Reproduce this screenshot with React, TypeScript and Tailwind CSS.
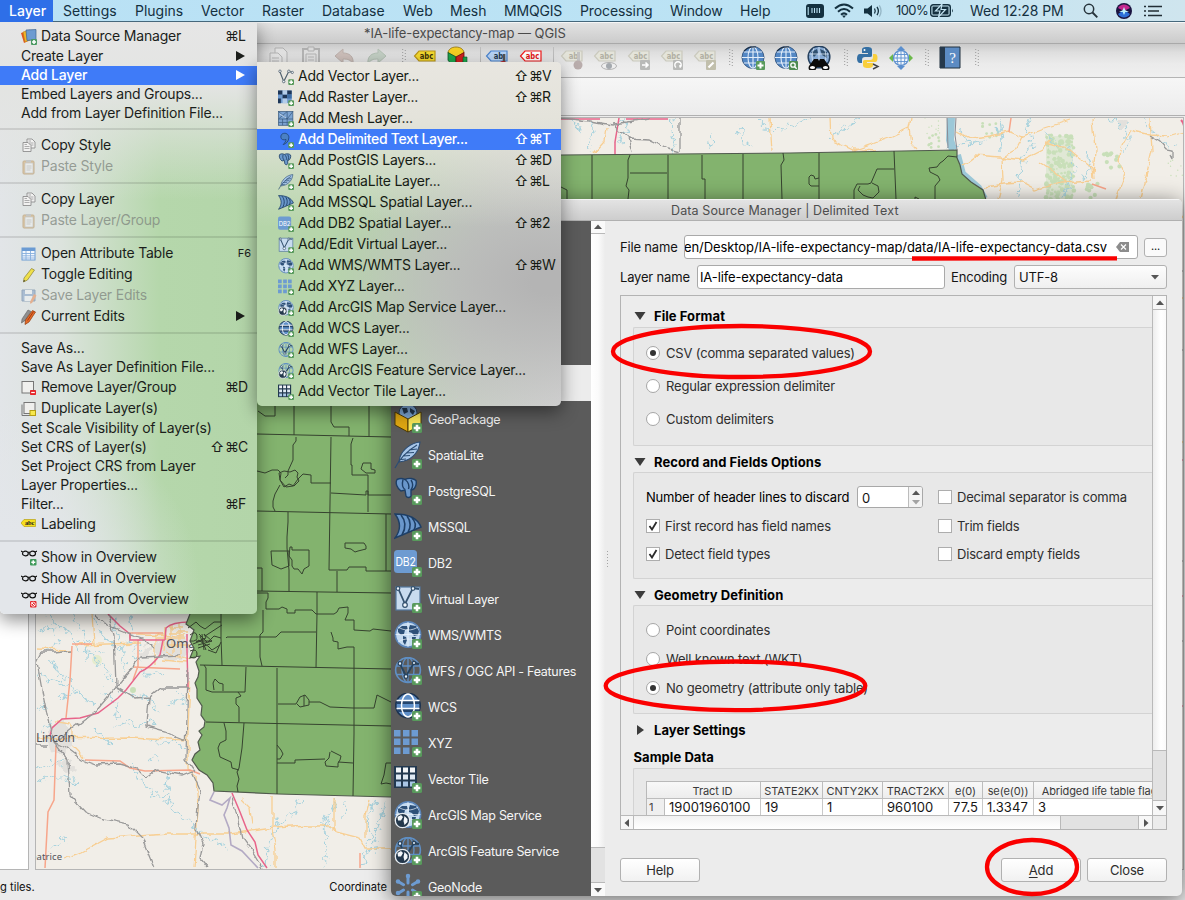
import type { ReactNode } from "react";

const UI = "font-['Inter','Liberation_Sans',sans-serif]";

/* ---------- layer icons (28 x 28 grid) ---------- */

const Plus = () => (
  <g>
    <rect x="18" y="18" width="10" height="10" rx="1.6" fill="#589a5c" />
    <path d="M23 19.7v6.6M19.7 23h6.6" stroke="#fff" strokeWidth="2.6" />
  </g>
);

const GlobeBase = () => (
  <g>
    <circle cx="14" cy="13.5" r="12.6" fill="#c4daf0" stroke="#5b86bb" strokeWidth="1.6" />
    <path d="M4 8l4-3 5 0 1 3-3 1-1 4-3 1-3-3zM9 15l3 1 1 3-2 5-2-3zM16 4l6 1 3 5-1 4-4 1-2-3-3-1 0-4zM18 16l4 0-1 4-3 2z" fill="#2d5078" />
    <path d="M1.5 13.5h25M14 1v25M4 6c6 4 14 4 20 0M4 21c6-4 14-4 20 0" stroke="#eef5fc" strokeWidth=".7" fill="none" />
  </g>
);

const WireGlobe = ({ stroke = "#5f8fc4", fill = "none" }: { stroke?: string; fill?: string }) => (
  <g fill="none" stroke={stroke} strokeWidth="1.3">
    <circle cx="14" cy="13" r="12.4" fill={fill} strokeWidth="1.6" />
    <ellipse cx="14" cy="13" rx="6" ry="12.4" />
    <path d="M2 9h24M2 17.500h24M14 1v24" />
  </g>
);

const VMark = ({ c = "#26435f" }: { c?: string }) => (
  <g fill="none" stroke={c} strokeWidth="1.8">
    <path d="M6 7l6 12 8-13 5 1" />
    <g fill="#e8f0f8" strokeWidth="1.2">
      <circle cx="6" cy="6.500" r="1.800" />
      <circle cx="12" cy="19.500" r="1.800" />
      <circle cx="20" cy="6" r="1.600" />
    </g>
  </g>
);

const EsriBall = () => (
  <g>
    <circle cx="8.500" cy="19.500" r="7.200" fill="#24384c" stroke="#e8edf2" strokeWidth="1.300" />
    <path d="M3.500 16l3.500-2 2 2-2 3.500-3 0zM10.500 15l3 3 0 3-3 3-1-4z" fill="#f4f7fa" />
  </g>
);

type IconName =
  | "vector" | "raster" | "mesh" | "comma" | "pg" | "feather" | "mssql" | "db2" | "virtual" | "wms"
  | "xyz" | "ams" | "wcs" | "wfs" | "afs" | "vtile" | "gpkg" | "geonode";

const layerArt: Record<IconName, ReactNode> = {
  vector: (
    <g fill="none" stroke="#50616f" strokeWidth="2">
      <path d="M3 4l7 18L19 4l6 2" />
      <g fill="#eef2f5" strokeWidth="1.400">
        <circle cx="3.500" cy="4" r="2.200" /><circle cx="10" cy="22" r="2.200" /><circle cx="19" cy="4" r="2.200" /><circle cx="25" cy="6" r="2" />
      </g>
    </g>
  ),
  raster: (
    <g>
      <rect x="0" y="1" width="24" height="22" fill="#6f9bd0" />
      <path d="M0 1h8v7H0zM16 1h8v7h-8zM8 8h8v7H8zM0 15h5v8H0z" fill="#1d3557" />
      <path d="M8 1h8v7H8zM8 15h8v8H8z" fill="#b4cdea" />
      <path d="M16 8h8v7h-8z" fill="#3f6ea6" />
    </g>
  ),
  mesh: (
    <g stroke="#3b5c80" strokeWidth="1.300" fill="#7ba3d2">
      <rect x="1" y="1" width="25" height="24" />
      <path d="M1 1l15 13M16 1L1 14M16 1v24M1 14h25M26 1L16 14M1 20h25M8 14v11" fill="none" />
      <path d="M3 5l11 7" stroke="#d9e8f7" />
    </g>
  ),
  comma: <path d="M8 3c5-2 11 0 11 7 0 6-5 11-10 12 3-3 5-6 5-9-4 2-9 0-9-4 0-3 1-5 3-6z" fill="#4a80c4" stroke="#234a80" strokeWidth="1.600" />,
  pg: (
    <g fill="#6a97cb" stroke="#1e3f66" strokeWidth="1.400">
      <path d="M3 2.500c4-2 6-1 8 0 4-2 9-1 11 1 1 4-1 8-3 9l-2 .5 0 6c-1 2-4 2-5 0l-1-6-4 1C3 11 1 6 3 2.500z" />
      <path d="M9 2.500c-1 4-1 8 2 10M11.500 3c3 2 4 6 3 9M17 13c2-3 2-7 0-10" fill="none" />
    </g>
  ),
  feather: (
    <g>
      <path d="M26 1C17 2 9 8 6 16l-1 5 5-1c8-2 15-9 16-19z" fill="#a8c6e8" stroke="#2c4d74" strokeWidth="1.100" />
      <path d="M1 27C6 17 13 10 23 4M9 15l7-.5M12 12l8-.5M7 18.500l5-.5M15 9l8-1" stroke="#2c4d74" strokeWidth="1.200" fill="none" />
    </g>
  ),
  mssql: (
    <g>
      <path d="M1 1c11 0 22 3 26 13L1 25C7 17 7 9 1 1z" fill="#6a97cb" stroke="#1e3f66" strokeWidth="1.400" />
      <path d="M7 2c5 6 5 13 1 20M13 3c4 5 4 12 1 16M18 5c4 4 4 8 2 12" stroke="#1e3f66" strokeWidth="1.600" fill="none" />
    </g>
  ),
  db2: (
    <g>
      <rect x="0" y="1" width="23" height="23" rx="3.500" fill="#6d9bd1" />
      <text x="11.500" y="17" fontSize="11.500" textAnchor="middle" textLength="20" lengthAdjust="spacingAndGlyphs" fill="#fff" className="font-['Inter',sans-serif]">DB2</text>
    </g>
  ),
  virtual: (
    <g>
      <rect x="2" y="2" width="24" height="23" fill="#c8dbef" stroke="#54779d" strokeWidth="1.200" />
      <path d="M4 3l7 16 8-16 6 1" stroke="#35526f" strokeWidth="1.800" fill="none" />
      <g fill="#f1f6fb" stroke="#35526f" strokeWidth="1.200"><circle cx="4" cy="3.500" r="1.800" /><circle cx="11" cy="20" r="2.300" /><circle cx="19" cy="3.500" r="1.800" /></g>
    </g>
  ),
  wms: <GlobeBase />,
  xyz: (
    <path fill="#6d9bd1" d="M0 1h6.500v6.500H0zM9 1h6.500v6.500H9zM17.500 1H24v6.500h-6.500zM0 9.500h6.500V16H0zM9 9.500h6.500V16H9zM17.500 9.500H24V16h-6.500zM0 18.500h6.500V25H0zM9 18.500h6.500V25H9z" />
  ),
  ams: <g><GlobeBase /><EsriBall /></g>,
  wcs: (
    <g>
      <circle cx="14" cy="12.500" r="12.200" fill="#5f8fc8" stroke="#1c3350" strokeWidth="1.600" />
      <path d="M3 7h22v4H3zM3 15h22v4H4z" fill="#24446b" />
      <g fill="none" stroke="#fff" strokeWidth="1.500"><ellipse cx="14" cy="12.500" rx="6.500" ry="11.500" /><path d="M2.500 7.500h23M2.500 15.500h23" /></g>
    </g>
  ),
  wfs: <g><WireGlobe /><VMark /></g>,
  afs: <g><WireGlobe /><VMark /><EsriBall /></g>,
  vtile: (
    <g>
      <rect x="0" y="1" width="23" height="22" fill="#22384f" />
      <path d="M2 2.500h5v5H2zM9 2.500h5v5H9zM16 2.500h5v5h-5z" fill="#f2f5f8" />
      <path d="M2 9.500h5v5H2zM9 9.500h5v5H9zM16 9.500h5v5h-5z" fill="#dfe9f3" />
      <path d="M2 16.500h5v5H2zM9 16.500h5v5H9zM16 16.500h5v5h-5z" fill="#a9c6e6" />
    </g>
  ),
  gpkg: (
    <g>
      <circle cx="14" cy="8" r="9" fill="#7ea8d6" stroke="#26435f" />
      <path d="M8 3l5 0 1 4-4 2zM16 3l5 3-2 4-3-3z" fill="#22384f" />
      <path d="M1 7l13 7v13L1 20z" fill="#e0a812" stroke="#4c3a05" />
      <path d="M27 7l-13 7v13l13-7z" fill="#fbe95a" stroke="#4c3a05" />
    </g>
  ),
  geonode: (
    <g stroke="#6d9bd1" strokeWidth="3" strokeLinecap="round">
      <path d="M14 4v6M14 19v6M5 9l4.500 2.700M18.500 17l4.500 2.700M5 19.700L9.500 17M18.500 11.700L23 9" />
      <path d="M14 3v.1M4 8.500v.1M24 8.500v.1M4 20v.1" strokeWidth="4.500" />
    </g>
  ),
};

function LayerIcon({ name, size }: { name: IconName; size: string }) {
  return (
    <svg viewBox="0 0 28 28" className={`${size} shrink-0`}>
      {layerArt[name]}
      <Plus />
    </svg>
  );
}

/* ---------- small menu icons (16 x 16 grid) ---------- */

const Sheet = ({ x, y }: { x: number; y: number }) => (
  <g>
    <path d={`M${x} ${y}h5l3 3v6h-8z`} fill="#f1f1f0" stroke="#8f8f8f" strokeWidth=".9" />
    <path d={`M${x + 1.5} ${y + 4}h5M${x + 1.5} ${y + 6}h5M${x + 1.5} ${y + 2}h2.500`} stroke="#9c9c9c" strokeWidth=".8" />
  </g>
);
const Glasses = ({ y = 4 }: { y?: number }) => (
  <g fill="none" stroke="#141414" strokeWidth="1.200">
    <ellipse cx="4.400" cy={y + 1} rx="2.900" ry="2.300" />
    <ellipse cx="11.600" cy={y + 1} rx="2.900" ry="2.300" />
    <path d={`M0 ${y - 1.5}l1.800 1M16 ${y - 1.500}l-1.800 1M7 ${y}q1-.6 2 0`} />
  </g>
);

type SmallName = "dsm" | "copy" | "paste" | "table" | "pencil" | "save" | "pencils" | "remove" | "dup" | "label" | "show" | "showall" | "hide";
const smallArt: Record<SmallName, ReactNode> = {
  dsm: (
    <g>
      <path d="M0 4l6-2 3 9-6 3z" fill="#e0561f" />
      <path d="M2 3l7-2 3 9-8 3z" fill="#f0b429" stroke="#b87d10" strokeWidth=".5" />
      <path d="M5 1l10-.5 0 10-9 1z" fill="#6d9bd1" stroke="#3f6490" strokeWidth=".7" />
      <rect x="10" y="10" width="6" height="6" rx="1" fill="#4c9a63" /><path d="M13 11v4M11 13h4" stroke="#fff" strokeWidth="1.600" />
    </g>
  ),
  copy: <g><Sheet x={6} y={1} /><Sheet x={2} y={4.500} /></g>,
  paste: (
    <g opacity=".5">
      <rect x="2" y="2" width="11" height="13" rx="1" fill="#d9a866" stroke="#a87e45" />
      <rect x="4" y="4" width="8" height="10" fill="#f0f0f0" stroke="#999" strokeWidth=".6" />
      <rect x="5" y="1" width="5" height="2.500" fill="#aaa" /><path d="M5.500 7h5M5.500 9h5M5.500 11h4" stroke="#999" strokeWidth=".8" />
    </g>
  ),
  table: (
    <g>
      <rect x="1" y="2" width="13" height="12" fill="#f4f8fd" stroke="#6b9bd3" />
      <path d="M1 2h13v3H1z" fill="#6b9bd3" />
      <path d="M1 7.500h13M1 9.800h13M1 12h13M5 5v9M9.500 5v9" stroke="#86aedd" strokeWidth=".9" />
    </g>
  ),
  pencil: <g><path d="M10.500 1.500l3 1.500-7 10-4 2 .5-4z" fill="#efe04a" stroke="#8a8036" strokeWidth=".7" /><path d="M2.500 15l.3-2 1.500.8z" fill="#333" /></g>,
  save: (
    <g opacity=".55">
      <path d="M1 2h13v11H1z" fill="#7d9dc4" stroke="#58779b" /><path d="M4 2h7v4H4zM3.500 8h8v5h-8z" fill="#eef1f4" />
      <path d="M13 6l2.500 1.500L11 15l-2 .8.200-2.300z" fill="#e8874e" />
    </g>
  ),
  pencils: (
    <g>
      <path d="M7 1l3 1.500-6 9-3.500 2.500.5-4z" fill="#8f8f8f" stroke="#5f5f5f" strokeWidth=".6" />
      <path d="M11.500 1.500l3 1.500-6.500 10-4 2.500.5-4.500z" fill="#e56a26" stroke="#8f3b0e" strokeWidth=".7" /><path d="M12.500 2.500l-6 9" stroke="#a63a12" />
    </g>
  ),
  remove: <g><rect x="1" y="1.500" width="11.500" height="11.500" fill="#f0f0ee" stroke="#777" /><rect x="9" y="10" width="6" height="5" rx=".8" fill="#e5252a" /><path d="M10.200 12.500h3.600" stroke="#fff" strokeWidth="1.200" /></g>,
  dup: <g><path d="M1 3.500v11h10" fill="none" stroke="#777" /><rect x="3" y="1.500" width="11" height="11" fill="#efefed" stroke="#777" /><rect x="9" y="9.500" width="5.500" height="5" fill="#f7e84c" stroke="#b59d12" /></g>,
  label: (
    <g>
      <path d="M3 2.500h11.500v7H3L0 6z" fill="#f6de1e" stroke="#b7a216" strokeWidth=".7" />
      <text x="8.500" y="8.200" fontSize="6.500" fontWeight="700" textAnchor="middle" fill="#222" className="font-['Liberation_Serif',serif]">abc</text>
    </g>
  ),
  show: <g><Glasses y={2.500} /><rect x="9" y="9" width="6.500" height="6.500" rx="1" fill="#3f9a5a" /><path d="M12.250 10.300v4M10.300 12.250h4" stroke="#fff" strokeWidth="1.400" /></g>,
  showall: <Glasses y={6.500} />,
  hide: <g><Glasses y={2.500} /><rect x="9" y="9" width="6.500" height="6.500" rx="1" fill="#e5252a" /><path d="M10.500 10.500l3.500 3.500" stroke="#fff" /><circle cx="12.250" cy="12.250" r="2.100" fill="none" stroke="#fff" strokeWidth=".8" /></g>,
};
const SmallIcon = ({ name }: { name: SmallName }) => (
  <svg viewBox="0 0 16 16" className="h-4 w-4 shrink-0">{smallArt[name]}</svg>
);

/* ---------- menus ---------- */

function Keys({ keys }: { keys: string }) {
  const shift = keys.startsWith("⇧");
  const letter = keys[keys.length - 1];
  return (
    <span className="mb-[2px] flex shrink-0">
      <span className="-ml-[1px] mr-[1px] w-[14px] text-center">{shift ? "⇧" : ""}</span>
      <span className="w-[13px]">⌘</span>
      <span className="w-[19px]">{letter}</span>
    </span>
  );
}

type Item = { t: string; icon?: SmallName; keys?: string; fn?: string; arrow?: boolean; on?: boolean; off?: boolean };
const layerMenu: Item[][] = [
  [
    { t: "Data Source Manager", icon: "dsm", keys: "⌘L" },
    { t: "Create Layer", arrow: true },
    { t: "Add Layer", arrow: true, on: true },
    { t: "Embed Layers and Groups..." },
    { t: "Add from Layer Definition File..." },
  ],
  [{ t: "Copy Style", icon: "copy" }, { t: "Paste Style", icon: "paste", off: true }],
  [{ t: "Copy Layer", icon: "copy" }, { t: "Paste Layer/Group", icon: "paste", off: true }],
  [
    { t: "Open Attribute Table", icon: "table", fn: "F6" },
    { t: "Toggle Editing", icon: "pencil" },
    { t: "Save Layer Edits", icon: "save", off: true },
    { t: "Current Edits", icon: "pencils", arrow: true },
  ],
  [
    { t: "Save As..." },
    { t: "Save As Layer Definition File..." },
    { t: "Remove Layer/Group", icon: "remove", keys: "⌘D" },
    { t: "Duplicate Layer(s)", icon: "dup" },
    { t: "Set Scale Visibility of Layer(s)" },
    { t: "Set CRS of Layer(s)", keys: "⇧⌘C" },
    { t: "Set Project CRS from Layer" },
    { t: "Layer Properties..." },
    { t: "Filter...", keys: "⌘F" },
    { t: "Labeling", icon: "label" },
  ],
  [
    { t: "Show in Overview", icon: "show" },
    { t: "Show All in Overview", icon: "showall" },
    { t: "Hide All from Overview", icon: "hide" },
  ],
];

function LayerMenu() {
  return (
    <div className="absolute left-0 top-[22px] z-30 h-[592px] w-[257px] overflow-hidden rounded-b-[5px] bg-[linear-gradient(to_bottom,#e6e6e6_0%,#e3e4e2_11%,rgba(226,228,226,0)_30%),radial-gradient(ellipse_200px_190px_at_0%_96%,#e3e6ea_30%,rgba(226,230,230,0)_100%),linear-gradient(to_right,#e2e5e8_0%,#dce3dd_24%,#b5d7ab_62%,#b3d5a9_100%)] py-1 text-[14px] tracking-[-0.2px] text-[#1b1e1b] shadow-[0_6px_18px_rgba(0,0,0,0.45)]">
      {layerMenu.map((group, gi) => (
        <div key={gi}>
          {gi > 0 && (
            <div className="h-3 pt-[5px]"><div className="h-[2px] bg-black/10" /></div>
          )}
          {group.map((it) => (
            <div
              key={it.t}
              className={`flex items-center pl-[21px] ${it.icon ? "h-[21px]" : "h-[19px]"} ${it.on ? "bg-[#3f7bf8] font-medium text-white" : ""} ${it.off ? "text-[#7d847d]/75" : ""}`}
            >
              {it.icon && <SmallIcon name={it.icon} />}
              <span className={`mb-[2px] whitespace-nowrap ${it.icon ? "ml-1" : ""}`}>{it.t}</span>
              <span className="flex-1" />
              {it.keys && <Keys keys={it.keys} />}
              {it.fn && <span className="mr-[6px] text-[11px] tracking-normal">{it.fn}</span>}
              {it.arrow && (
                <svg viewBox="0 0 9 10" className="mb-[1px] mr-[12px] h-[10px] w-[9px]"><path d="M0 0l9 5-9 5z" fill="currentColor" /></svg>
              )}
            </div>
          ))}
        </div>
      ))}
    </div>
  );
}

const addMenu: { t: string; icon: IconName; keys?: string; on?: boolean }[] = [
  { t: "Add Vector Layer...", icon: "vector", keys: "⇧⌘V" },
  { t: "Add Raster Layer...", icon: "raster", keys: "⇧⌘R" },
  { t: "Add Mesh Layer...", icon: "mesh" },
  { t: "Add Delimited Text Layer...", icon: "comma", keys: "⇧⌘T", on: true },
  { t: "Add PostGIS Layers...", icon: "pg", keys: "⇧⌘D" },
  { t: "Add SpatiaLite Layer...", icon: "feather", keys: "⇧⌘L" },
  { t: "Add MSSQL Spatial Layer...", icon: "mssql" },
  { t: "Add DB2 Spatial Layer...", icon: "db2", keys: "⇧⌘2" },
  { t: "Add/Edit Virtual Layer...", icon: "virtual" },
  { t: "Add WMS/WMTS Layer...", icon: "wms", keys: "⇧⌘W" },
  { t: "Add XYZ Layer...", icon: "xyz" },
  { t: "Add ArcGIS Map Service Layer...", icon: "ams" },
  { t: "Add WCS Layer...", icon: "wcs" },
  { t: "Add WFS Layer...", icon: "wfs" },
  { t: "Add ArcGIS Feature Service Layer...", icon: "afs" },
  { t: "Add Vector Tile Layer...", icon: "vtile" },
];

function AddLayerMenu() {
  return (
    <div className="absolute left-[257px] top-[62px] z-40 h-[344px] w-[304px] overflow-hidden rounded-[5px] rounded-tl-none bg-[linear-gradient(to_bottom,#e8e6e0_0%,#e4e3db_16%,rgba(226,228,216,0)_48%),radial-gradient(ellipse_230px_150px_at_96%_64%,#b4b4b4_8%,rgba(184,184,184,0.8)_40%,rgba(190,195,188,0)_100%),linear-gradient(100deg,#b4d5a8_0%,#b7d5ac_35%,#c9d0c6_72%,#d4d4d4_100%)] py-1 text-[14px] tracking-[-0.24px] text-[#161c14] shadow-[0_6px_18px_rgba(0,0,0,0.45)]">
      {addMenu.map((it) => (
        <div key={it.t} className={`flex h-[21px] items-center pl-[21px] ${it.on ? "bg-[#3f7bf8] font-medium tracking-[-0.34px] text-white" : ""}`}>
          <LayerIcon name={it.icon} size="h-4 w-4" />
          <span className="mb-[2px] ml-1 whitespace-nowrap">{it.t}</span>
          <span className="flex-1" />
          {it.keys && <Keys keys={it.keys} />}
        </div>
      ))}
    </div>
  );
}

/* ---------- system menu bar ---------- */

function MenuBar() {
  return (
    <div className="relative z-50 flex h-[22px] w-full items-center border-b border-[#46687c] bg-[linear-gradient(to_right,#b9e1f5,#bce3f4_65%,#cfe5ee_100%)] text-[14px] text-[#14303f]">
      <div className="flex h-[22px] w-[53px] items-center bg-[#2e6fe8] pl-[9px] font-medium text-white">Layer</div>
      <span className="ml-[10px] w-[72px]">Settings</span>
      <span className="w-[66px]">Plugins</span>
      <span className="w-[61px]">Vector</span>
      <span className="w-[60px]">Raster</span>
      <span className="w-[81px]">Database</span>
      <span className="w-[47px]">Web</span>
      <span className="w-[54px]">Mesh</span>
      <span className="w-[76px] tracking-[-0.2px]">MMQGIS</span>
      <span className="w-[90px] tracking-[-0.1px]">Processing</span>
      <span className="w-[70px] tracking-[-0.2px]">Window</span>
      <span className="w-[66px]">Help</span>
      <svg viewBox="0 0 18 14" className="h-[14px] w-[18px]">
        <rect width="18" height="14" rx="3" fill="#14303f" />
        <path d="M2.200 3v8M6 4v5M8.500 4v5M11 4v5M13.500 4v5" stroke="#b9dff0" strokeWidth="1.100" />
      </svg>
      <svg viewBox="0 0 20 15" className="ml-[10px] h-[15px] w-[20px]" fill="none" stroke="#14303f" strokeWidth="2">
        <path d="M1 5.500Q10-2.500 19 5.500M4 8.700Q10 3.300 16 8.700M7 11.700Q10 9 13 11.700" /><path d="M8 12.500h4l-2 2.500z" fill="#14303f" stroke="none" />
      </svg>
      <svg viewBox="0 0 18 14" className="ml-[10px] h-[14px] w-[18px]" fill="none" stroke="#14303f" strokeWidth="1.300">
        <path d="M0 4.500h3.500L8 1v12L3.500 9.500H0z" fill="#14303f" stroke="none" /><path d="M10.500 4.500q1.500 2.500 0 5M13 2.800q2.800 4.200 0 8.400" /><path d="M15.300 1.300q3.500 5.700 0 11.400" opacity=".25" />
      </svg>
      <span className="ml-[14px] w-[34px] text-[13px] tracking-[-0.6px]">100%</span>
      <svg viewBox="0 0 24 13" className="h-[13px] w-[24px]">
        <rect x=".7" y=".7" width="19.600" height="11.600" rx="2.500" fill="none" stroke="#14303f" strokeWidth="1.400" />
        <rect x="2.500" y="2.500" width="16" height="8" fill="#14303f" /><path d="M12 0L5.500 7h4.500L8.500 13 15.500 5.500H11z" fill="#14303f" stroke="#c2e2f0" strokeWidth="1.200" />
        <path d="M22 4.500v4q1.500-2 0-4z" fill="#14303f" />
      </svg>
      <span className="ml-[16px] w-[113px] whitespace-nowrap tracking-[-0.1px]">Wed 12:28 PM</span>
      <svg viewBox="0 0 15 15" className="h-[15px] w-[15px]" fill="none" stroke="#26333b" strokeWidth="1.500"><circle cx="6" cy="6" r="4.700" /><path d="M9.500 9.500L14.300 14.300" strokeWidth="1.900" /></svg>
      <svg viewBox="0 0 16 16" className="ml-[18px] h-4 w-4">
        <circle cx="8" cy="8" r="8" fill="#1b1440" /><path d="M2 5a7 7 0 0 1 12 0L8 8z" fill="#c3278f" /><path d="M2 11l6-4 6 4a7 7 0 0 1-12 0z" fill="#2c6fd8" />
        <path d="M8 4l1.300 3.300L13 9 9.300 9 8 12l-1.300-3L3 9l3.700-1.700z" fill="#bff3fb" />
      </svg>
      <svg viewBox="0 0 18 12" className="ml-[12px] h-3 w-[18px]"><path d="M4 1.500h14M4 6h11M4 10.500h14" stroke="#222e35" strokeWidth="1.600" /><path d="M0 1.500h2M0 6h2M0 10.500h2" stroke="#222e35" strokeWidth="1.600" /></svg>
    </div>
  );
}

/* ---------- toolbar ---------- */

const Dots = ({ m }: { m: string }) => (
  <svg viewBox="0 0 4 18" className={`${m} h-[18px] w-[4px] shrink-0`}>
    <path d="M.7 0v18M3.300 1v17" stroke="#9b9b9b" strokeWidth="1" strokeDasharray="1 2" />
  </svg>
);
const Sep = ({ m }: { m: string }) => <div className={`${m} flex w-[4px] shrink-0 justify-center`}><div className="h-[22px] w-px bg-[#bdbdbd]" /></div>;
const Tool = ({ m, children }: { m: string; children: ReactNode }) => (
  <svg viewBox="0 0 24 24" className={`${m} h-6 w-6 shrink-0`}>{children}</svg>
);
const Tag = ({ fill, stroke, text, label = "abc" }: { fill: string; stroke: string; text: string; label?: string }) => (
  <g>
    <path d="M6 5h16v10H6L1.500 10z" fill={fill} stroke={stroke} strokeWidth="1.200" />
    <text x="13.500" y="13.200" fontSize="8.500" fontWeight="700" textAnchor="middle" fill={text} className="font-['DejaVu_Sans',sans-serif]" textLength={label.length > 2 ? 13.500 : 9.500} lengthAdjust="spacingAndGlyphs">{label}</text>
  </g>
);
const GrayTag = ({ label }: { label?: string }) => <Tag fill="#e4e4da" stroke="#cac9bd" text="#b0afa2" label={label} />;
const WebGlobe = () => (
  <g>
    <circle cx="12" cy="11.500" r="11" fill="#5387c4" stroke="#3c5d86" />
    <g fill="none" stroke="#e4eefa" strokeWidth="1.100"><ellipse cx="12" cy="11.500" rx="5" ry="10.700" /><path d="M12 1v21M1 11.500h22M3 6h18M3 17h18" /></g>
    <path d="M3 5Q8 0 15 1" stroke="#1f2f42" strokeWidth="1.200" fill="none" />
  </g>
);

function Toolbar() {
  return (
    <div className="flex h-[34px] items-center border-b border-[#b4b4b4] bg-[linear-gradient(to_bottom,#c9c9c9_0%,#dedede_25%,#ebebeb_60%,#efefef_100%)] pb-[5px] pl-[266px]">
      <Tool m=""><g opacity=".4" fill="#eee" stroke="#777"><path d="M9 2h8l4 4v11H9z" /><path d="M4 7h8l4 4v11H4z" /><path d="M6 12h7M6 15h7" /></g></Tool>
      <Tool m="ml-[9px]"><g opacity=".4" fill="#e4e4e4" stroke="#777"><rect x="4" y="3" width="16" height="18" strokeWidth="2" /><path d="M7 8h10v11H7zM9 1h6v4H9zM9 11h6M9 14h6" /></g></Tool>
      <Tool m="ml-[9px]"><path d="M3 10l8-7v4c6 0 11 3 10 11-2-4-5-5-10-5v4z" fill="#cdbfba" stroke="#bdb1ac" /></Tool>
      <Tool m="ml-[9px]"><path d="M21 10l-8-7v4C7 7 2 10 3 18c2-4 5-5 10-5v4z" fill="#c3cfc4" stroke="#b3c0b4" /></Tool>
      <Dots m="ml-[13px]" />
      <Tool m="ml-[7px]"><Tag fill="#f4d92e" stroke="#b9951a" text="#3f3308" /></Tool>
      <Tool m="ml-[8px]">
        <path d="M11 11L3 7c0-3 3-6 8-6s8 3 8 6z" fill="#f4ce22" stroke="#8b6d0d" strokeWidth=".8" /><path d="M11 11L3 6.500v8l5 4.500h3z" fill="#1ca64d" stroke="#0f5428" strokeWidth=".8" /><path d="M11 11l8-4.500v8L14 19h-3z" fill="#cf2020" stroke="#6d0e0e" strokeWidth=".8" /><path d="M18 11h4v9h-4z" fill="#1ca64d" stroke="#0f5428" strokeWidth=".6" />
      </Tool>
      <Sep m="ml-[9px]" />
      <Tool m="ml-[3px]"><Tag fill="#b7d3f5" stroke="#4c85cf" text="#23384f" label="ab" /><path d="M19 8v10" stroke="#555" strokeWidth="2.600" /><circle cx="18" cy="19" r="4" fill="#b3282d" /></Tool>
      <Tool m="ml-[10px]"><Tag fill="#fff" stroke="#f01a1a" text="#e51313" /></Tool>
      <Sep m="ml-[8px]" />
      <Tool m="ml-[5px]"><GrayTag label="ab" /><path d="M18.500 6v11" stroke="#c2c2c2" strokeWidth="3" /><circle cx="18" cy="19" r="4.500" fill="#b9adac" /></Tool>
      <Tool m="ml-[9px]"><GrayTag /><ellipse cx="16" cy="20" rx="7.500" ry="3.500" fill="#eee" stroke="#b2b2b2" /><circle cx="16" cy="20" r="3" fill="#a4a9ae" /></Tool>
      <Tool m="ml-[10px]"><GrayTag /><rect x="13" y="14" width="10" height="10" rx="1" fill="#b9bab8" /><path d="M15 19h6M18.500 16.500L21 19l-2.500 2.500" stroke="#fff" strokeWidth="1.600" fill="none" /></Tool>
      <Tool m="ml-[9px]"><GrayTag /><rect x="13" y="14" width="10" height="10" rx="1" fill="#b9bab8" /><path d="M16 21.500a3.200 3.200 0 1 1 4 0M20 21.500v-2.500" stroke="#fff" strokeWidth="1.400" fill="none" /></Tool>
      <Tool m="ml-[9px]"><GrayTag /><rect x="13" y="14" width="10" height="10" rx="1" fill="#c1bfac" /><path d="M15.500 21.500l5-5" stroke="#fff" strokeWidth="2.200" /></Tool>
      <Dots m="ml-[12px]" />
      <Tool m="ml-[8px]"><WebGlobe /><rect x="15" y="15" width="9" height="9" rx="1" fill="#5a9a5c" /><path d="M19.500 16.500v6M16.500 19.500h6" stroke="#fff" strokeWidth="2" /></Tool>
      <Tool m="ml-[9px]"><WebGlobe /><rect x="15" y="15" width="9" height="9" rx="1" fill="#4d8c50" /><circle cx="19" cy="19" r="2.200" fill="none" stroke="#fff" strokeWidth="1.300" /><path d="M20.700 20.700l2 2" stroke="#fff" strokeWidth="1.400" /></Tool>
      <Tool m="ml-[9px]">
        <circle cx="12" cy="11" r="10.800" fill="#86aad4" stroke="#26415f" strokeWidth="1.500" /><path d="M4 6l6-3 1 4-4 4zM13 3l7 3 0 6-5-3z" fill="#30506f" /><path d="M2 8h20M12 1v20M7 2q-4 9 0 16M17 2q4 9 0 16" stroke="#dbe8f6" strokeWidth=".8" fill="none" />
        <path d="M7 13h4l1 2 1-2h4l5 7a3 3 0 0 1-7 3l-1-2h-4l-1 2a3 3 0 0 1-7-3z" fill="#0c0c0c" /><ellipse cx="5.500" cy="21.500" rx="2.600" ry="1.500" fill="#fff" /><ellipse cx="18.500" cy="21.500" rx="2.600" ry="1.500" fill="#fff" />
      </Tool>
      <Dots m="ml-[13px]" />
      <Tool m="ml-[8px]">
        <path d="M11 1c-4 0-5 1-5 3v3h6v1H4C2 8 1 10 1 12.500S2 17 4 17h2v-3c0-2 1-3 3-3h5c2 0 2-1 2-2V4c0-2-1-3-5-3z" fill="#3570a4" />
        <path d="M12 22c4 0 5-1 5-3v-2h-6v-1h8c2 0 2.500-2 2.500-4S21 8 19 8h-2v3c0 2-1 3-3 3H9c-2 0-2 1-2 2v3c0 2 1 3 5 3z" fill="#f9cf3c" /><circle cx="8.500" cy="4" r="1" fill="#fff" />
        <path d="M17 18l5 2.500-5 2.500" fill="none" stroke="#444" strokeWidth="1.400" />
      </Tool>
      <Tool m="ml-[9px]">
        <path d="M12 0l4 4H8zM12 24l4-4H8z" fill="#5b8fce" /><path d="M0 12l4-4v8zM24 12l-4-4v8z" fill="#6cb94b" />
        <circle cx="12" cy="12" r="7.500" fill="#f3f7fc" stroke="#5b8fce" strokeWidth="1.300" /><path d="M12 4.500v15M4.500 12h15M6 8.500h12M6 15.500h12M9 5.500q-2 6.500 0 13M15 5.500q2 6.500 0 13" stroke="#5b8fce" strokeWidth=".9" fill="none" />
      </Tool>
      <Dots m="ml-[12px]" />
      <Tool m="ml-[9px]">
        <path d="M2 1h20v21H2z" fill="#5c8bc3" stroke="#20303f" /><path d="M2 1h5v21H2z" fill="#26394c" />
        <text x="14.500" y="17" fontSize="15" textAnchor="middle" fill="#fff" className="font-['Liberation_Serif',serif]">?</text>
      </Tool>
      <Dots m="ml-[13px]" />
    </div>
  );
}

/* ---------- map ---------- */

const water = "#a9d3de";
const orange = "#f8cf93";
const trunk = "#f7a58a";
const motor = "#e8648a";
const rail = "#989898";

const iowa =
  "M100 156L561 155L790 153L957 150L957 158L960 165L962 174L971 182L983 190L986 200L986 797L391 797L278 794L214 791L213 783L207 775L199 770L192 760L195 754L200 750L198 742L202 735L199 731L204 727L205 721L201 715L202 706L197 698L197 689L195 683L198 677L199 671L196 662L200 656L190 658L194 648L190 641L194 630L186 624L190 614L186 600Z";

const counties = [
  "M257 434L391 437M257 511L391 514M257 591L391 593M200 665L391 669M206 722L391 726",
  "M294 406V435M331 406V422L334 427H349V436M369 406V436M258 411L265 416H275V406",
  "M296 437V441L293 445V460L288 471V475L285 478M331 437L329 570M353 438L351 444V465H352V475H368V512M331 493L366 495V491H368V495H391",
  "M257 471L265 473L272 470H278L281 473L280 480L286 487L293 486L298 479L303 474L311 475V483H331M279 473L284 471L290 472L295 470L298 473L297 477L299 481L294 486L289 484L284 487L280 480zM280 485L275 494L273 501V507L275 511",
  "M288 512V522L287 537V548L289 570V591M271 551H289V566L281 569L272 565zM290 547H292V550H309V566L304 569L302 574L298 569L294 569L292 566V560L289 556z",
  "M345 543H364L366 546V549L358 551L355 552L351 549L345 548zM329 570H347L349 567H366V571H391M337 571V592M386 514V571M363 463H371V469L375 470V473H371L366 473L361 469zM257 568H262V591",
  "M257 593L268 593L268 598L266 602V609H279L282 607L287 609V613H295V610H312L316 614H334L337 612L339 608L348 607V613L345 620H354V630L370 631L373 629L391 631",
  "M317 592V614L316 668M263 610L263 632L260 635V657L262 666M226 638L227 637H276L281 632H316M221 614V638L222 665M331 632L333 638V641L338 642V649L347 647H354V734L353 796",
  "M204 665L206 668V690L212 692H245L246 667M214 690L213 683L215 679L219 683L223 684V691M238 692L241 696L236 698V704L239 707L239 722M277 668V794",
  "M278 704H296L300 697L305 695L309 700V705L300 707L297 704M304 695V706M309 702L320 702L330 707L353 708H374L377 695L391 702",
  "M224 723L226 731V740L220 743L218 748L220 757L231 762L232 768L239 770M244 723L242 748L239 768L237 772L239 779L237 786L238 792M277 745L281 750L283 754L280 759H277",
  "M277 763H295V760L325 759M331 751L341 756L340 760L338 763V767L326 766L325 762L329 758L330 752M338 762L353 763M391 763H386L384 775L381 784L386 783L391 784",
  "M592 155V200M630 155L628 160V178L626 186L629 190L628 199M630 173H667M668 155V200M702 155V179H705V199M743 154V200M783 153L784 160L781 165L782 199M819 153V200M819 178L815 179L814 176L811 175L809 177V184L811 186H819M894 151L896 199M894 169H877L874 176L871 183L868 184H857L854 190V199M860 186L858 190L863 195L868 197L873 198L876 195L879 192L878 186L872 183M957 157L948 156L943 161L940 163L937 167L929 168L930 172L938 176L940 180L935 186L935 199M561 187L567 190V199M915 199V197L919 199",
];

const rivers = [
  "M46 614L55 622L70 636L80 650L95 658L112 680M70 614L82 628L88 645L86 660M112 618L118 640L125 655L122 672M130 614L132 630L128 644M60 640L48 650M95 614L100 632L112 646",
  "M36 672L48 678L62 684L78 690L85 700M60 700L75 692L96 706M36 710L50 704M118 690L135 695L150 700L160 712M112 728L128 722L140 727L155 720M52 662L60 676L72 680M80 640L90 650L104 652M44 730L50 720M140 640L134 655L142 662",
  "M150 739L162 744L174 741L185 748M134 765L142 783L151 793L167 795L170 806L188 822L208 838L226 848M169 770L166 790M36 782L46 776L60 778L78 782M36 770L50 765L60 762M150 755L158 762M164 704L178 700L190 702",
  "M300 800L292 815L276 826L268 846L266 868M335 800L330 812L324 826L327 848L322 868M375 800L368 815L370 838L362 868M385 800L378 826L374 850M50 850L58 842L66 838M345 802L344 818M320 824L330 828",
  "M36 630L48 626L58 634M100 690L116 705L118 718M95 730L110 744M140 668L148 676L165 672M176 690L184 700",
  "M590 120L593 132L588 140L592 153M673 118L672 132L675 145L671 155M622 118L628 128L624 136L613 142M758 118L767 128L782 129L795 125L810 118M566 118L578 124L582 134M738 126L742 138L752 148M712 135L710 152M832 137L845 128L860 118M1030 118L1026 132L1034 143L1022 160L1020 178L1018 195M1043 130L1055 143L1068 150L1075 165L1070 182L1063 199M1087 150L1090 165L1086 178",
  "M948 150L962 142L972 146M1002 118L1000 130L1003 150M1126 124L1128 150M1142 118L1150 130L1161 140L1172 146M962 132L970 145L988 140M1110 118L1120 128",
];
const roads = [
  "M36 649L70 650M75 645L140 643M138 635L185 636M92 614L94 645M155 635V665M165 628L163 652M180 622V655M168 645H190M155 638H186M165 652L188 660M36 738L130 737L188 740",
  "M190 680L188 730V770L196 776L198 810L194 868M64 859L82 852L108 838L168 834H230L274 828L310 826L334 826L336 832L360 838L365 848H391M272 796V830L276 848V868M241 799L250 808L252 826",
  "M334 797V830M370 800L366 815V838M55 722L72 724L72 736M72 746L85 759M168 628H184M172 624V652M170 633H188M162 660L186 662",
  "M830 118L831 140L852 150L892 136L909 128L911 143L917 149M911 118L909 128M957 131L970 138L990 136L1010 132L1022 137L1045 128L1070 120M962 165L975 155L1000 157L1022 160L1042 150L1050 140M1002 157L1003 180L998 199M1022 137L1015 150L1000 158M985 187L1005 184L1022 183L1035 190L1062 182L1090 180M1045 143L1070 150L1092 168L1093 180M1092 118L1095 150L1093 175M1040 162L1052 170L1067 182M1130 130L1122 145L1118 160L1125 175L1116 199M1130 130L1150 135L1168 136M1150 118L1152 150L1145 180L1140 199M770 118L772 152M606 128L604 142L595 152M875 150L852 148M1185 132L1168 137",
];

const forest = Array.from({ length: 170 }, (_, i) => {
  const a = Math.sin(i * 12.9898) * 43758.5453;
  const b = Math.sin(i * 78.233) * 12543.123;
  return { x: 1046 + (a - Math.floor(a)) * 28, y: 135 + (b - Math.floor(b)) * 65, r: 0.8 + (i % 4) * 0.5 };
});
const groves = Array.from({ length: 60 }, (_, i) => {
  const a = Math.sin(i * 37.719) * 23421.631;
  const b = Math.sin(i * 11.135) * 9543.377;
  const hubs = [[933, 126], [934, 142], [1090, 190], [1176, 168], [990, 130], [1112, 160]];
  const [hx, hy] = hubs[i % hubs.length];
  return { x: hx - 8 + (a - Math.floor(a)) * 16, y: hy - 8 + (b - Math.floor(b)) * 16, r: 0.7 + (i % 3) * 0.7 };
});

function MapCanvas() {
  return (
    <svg viewBox="35 117 1149 753" className="h-[753px] w-[1149px] shrink-0">
      <defs>
        <filter id="wobble" filterUnits="userSpaceOnUse" x="30" y="110" width="1160" height="765">
          <feTurbulence type="fractalNoise" baseFrequency="0.09" numOctaves="2" seed="4" result="n" />
          <feDisplacementMap in="SourceGraphic" in2="n" scale="7" xChannelSelector="R" yChannelSelector="G" />
        </filter>
        <filter id="ragged" filterUnits="userSpaceOnUse" x="30" y="110" width="1160" height="765">
          <feTurbulence type="fractalNoise" baseFrequency="0.15" numOctaves="2" seed="9" result="n" />
          <feDisplacementMap in="SourceGraphic" in2="n" scale="16" xChannelSelector="R" yChannelSelector="G" />
        </filter>
      </defs>
      <rect x="35" y="117" width="1149" height="753" fill="#f1eee8" />
      <g fill="#bfdcae" opacity=".8">
        <rect x="1046" y="136" width="27" height="64" opacity=".4" />
        {[...forest, ...groves].map((p, i) => <circle key={i} cx={p.x} cy={p.y} r={p.r} />)}
        <circle cx="133" cy="690" r="3" />
        <ellipse cx="97" cy="660" rx="5" ry="5" fill="#e4ecc8" />
      </g>
      <g fill="#e2e0dc" filter="url(#ragged)"><ellipse cx="60" cy="738" rx="12" ry="16" /><ellipse cx="172" cy="648" rx="16" ry="14" /><ellipse cx="146" cy="652" rx="6" ry="5" /><circle cx="1122" cy="124" r="4" /><circle cx="66" cy="766" r="7" /></g>
      <g fill="none" stroke={water} strokeWidth="1.200" filter="url(#ragged)">{rivers.map((d) => <path key={d} d={d} />)}</g>
      <path d="M951 117L950 140L953 150M957 155L962 174L978 188L984 199" fill="none" stroke="#9cc8d8" strokeWidth="8" />
      <path d="M956 117L955 135L957 150M947 117L948 148" stroke="#8a8a94" fill="none" />
      <g fill="none" stroke={orange} strokeWidth="1.300" filter="url(#wobble)">{roads.map((d) => <path key={d} d={d} />)}</g>
      <g fill="none" stroke={trunk} strokeWidth="1.500">
        <path d="M72 646L70 680L66 718M92 644H72M130 638V633H163M133 667L180 669M56 745L54 800L48 812L45 868M85 760L120 761L130 768L145 771L190 770L200 774M138 640V666L133 680M360 853V868M1011 118L1009 132M1092 184L1106 189" />
      </g>
      <g fill="none" stroke={motor} strokeWidth="1.500">
        <path d="M108 614L120 626L130 634V640H165M165 640L166 628Q172 622 190 622M163 640L160 655Q150 668 140 672L126 690L118 698L98 713L80 718L62 719L52 728L50 736M187 634V650L188 690M232 793L240 812L247 830L255 842L258 855L267 868" />
        <path d="M561 119H600M626 119H668M619 118L617 130L615 142V155" />
      </g>
      <g fill="none" stroke={rail} strokeWidth="1.300" filter="url(#wobble)">
        <path d="M95 614L108 626L128 634L146 640L155 649M42 652L55 652L70 650M42 652L37 662L42 690L50 730L54 742L68 760L70 795L86 812L100 818L128 824L142 838L154 868M54 742L96 710L118 684L142 657L180 655M108 614L114 635L116 686L136 698L149 697L160 688L190 688M149 697L147 727L165 732L185 740M54 742L66 748L82 760L96 765L120 764L138 769L147 778L156 771L182 776L192 772L200 790L196 826L203 842L200 858L208 868M188 668L186 758L196 772M232 797L236 812L242 838L250 848L262 868M36 746H46" />
        <path d="M561 118L590 121L612 125M612 124L628 138L632 153M628 138L648 139L668 149L680 152M650 118L628 122L612 124M680 118V152" />
        <path d="M1150 136L1160 142L1166 149L1172 150V158L1170 154" />
      </g>
      <path d="M214 792L210 800L222 805L230 798L227 808L224 815L229 828L231 845L242 851L258 868" fill="none" stroke="#b3aac4" strokeWidth="1.600" />
      <g className="font-['Noto_Sans',sans-serif]" fill="#53535a">
        <text x="166" y="647.500" fontSize="13">Omaha</text>
        <text x="36" y="742" fontSize="12.500" textLength="39">Lincoln</text>
        <text x="31" y="860" fontSize="9.500" textLength="31">eatrice</text>
      </g>
      <path d={iowa} fill="#83b36e" stroke="#505a4d" strokeWidth="1.200" />
      <g fill="none" stroke="#36432f" strokeWidth="1">
        {counties.map((d) => <path key={d} d={d} />)}
        <path d="M188 628L196 622L200 626L205 629L214 622H221M190 635Q196 630 197 636T190 641M196 642L206 638L204 634L212 641L198 645M198 640L208 646L212 650L220 645M205 636L222 625M208 642L214 636L221 638M190 651Q197 648 197 654T190 657M200 636L204 645L206 650M198 648L210 644M208 650L216 653L221 642M202 634L204 650M196 641H212M193 644L203 640M199 634L207 642" />
      </g>
      <path d="M1181 120q3 3 3 6" stroke={motor} fill="none" strokeWidth="2" />
      <path d="M1180 270L1185 272M1180 350L1185 350M1180 560L1185 562M1180 640L1185 642" stroke={rail} fill="none" />
      <path d="M1180 220L1185 214M1180 300L1185 296M1180 440L1185 444" stroke={orange} fill="none" strokeWidth="1.500" />
      <path d="M1180 460L1185 460M1180 595L1185 597M1180 706L1185 706" stroke={motor} fill="none" />
    </svg>
  );
}

function QgisWindow() {
  return (
    <div className="absolute left-0 top-[22px] flex h-[878px] w-[1185px] flex-col bg-[#ececec]">
      <div className="h-[22px] border-b border-[#a9a9a9] border-t border-t-[#f6f6f6] bg-[linear-gradient(to_bottom,#e2e2e2,#cbcbcb)] pl-[364px] text-[13px] leading-[21px] tracking-[-0.07px] text-[#4a4a4a]">
        *IA-life-expectancy-map — QGIS
      </div>
      <Toolbar />
      <div className="h-[38px] border-b border-[#b0b0b0] bg-[linear-gradient(to_bottom,#f6f6f6,#ececec)]" />
      <div className="mt-[1px] flex h-[753px]">
        <div className="w-[29px] border-r border-y border-[#b5b5b5] bg-white" />
        <div className="ml-[6px] h-[753px] w-[1149px] overflow-hidden border border-[#b5b5b5]"><div className="-ml-px -mt-px"><MapCanvas /></div></div>
      </div>
      <div className="flex flex-1 items-center justify-between bg-[#ececec] pt-[4px] text-[11.200px] text-[#111]">
        <span>g tiles.</span>
        <span className="mr-[798px] tracking-[-0.05px]">Coordinate</span>
      </div>
    </div>
  );
}

/* ---------- data source manager dialog ---------- */

const sources: { t: string; icon: IconName }[] = [
  { t: "GeoPackage", icon: "gpkg" },
  { t: "SpatiaLite", icon: "feather" },
  { t: "PostgreSQL", icon: "pg" },
  { t: "MSSQL", icon: "mssql" },
  { t: "DB2", icon: "db2" },
  { t: "Virtual Layer", icon: "virtual" },
  { t: "WMS/WMTS", icon: "wms" },
  { t: "WFS / OGC API - Features", icon: "wfs" },
  { t: "WCS", icon: "wcs" },
  { t: "XYZ", icon: "xyz" },
  { t: "Vector Tile", icon: "vtile" },
  { t: "ArcGIS Map Service", icon: "ams" },
  { t: "ArcGIS Feature Service", icon: "afs" },
  { t: "GeoNode", icon: "geonode" },
];

const Tri = ({ dir }: { dir: "up" | "down" | "left" | "right" }) => {
  const d = { up: "M0 6L4 1.500 8 6z", down: "M0 2L4 6.500 8 2z", left: "M6 0L1.500 4 6 8z", right: "M2 0L6.500 4 2 8z" }[dir];
  return <svg viewBox="0 0 8 8" className="h-2 w-2"><path d={d} fill="#555" /></svg>;
};

const Radio = ({ on, children }: { on?: boolean; children: ReactNode }) => (
  <div className="flex h-4 items-center gap-[6px] text-[#2e2e2e]">
    <span className="flex h-[14px] w-[14px] items-center justify-center rounded-full border border-[#a6a6a6] bg-white">
      {on && <span className="h-[6px] w-[6px] rounded-full bg-[#333]" />}
    </span>
    <span className="mt-[2px] whitespace-nowrap">{children}</span>
  </div>
);

const Check = ({ on, children }: { on?: boolean; children: ReactNode }) => (
  <div className="flex h-4 items-center gap-[5px] text-[#2e2e2e]">
    <span className="flex h-[14px] w-[14px] items-center justify-center border border-[#adadad] bg-white">
      {on && <svg viewBox="0 0 10 10" className="h-[10px] w-[10px]"><path d="M1.500 5l2.500 3.500L8.500 1" fill="none" stroke="#2b2b2b" strokeWidth="1.800" /></svg>}
    </span>
    <span className="mt-[2px] whitespace-nowrap">{children}</span>
  </div>
);

const GroupTitle = ({ open = true, children }: { open?: boolean; children: ReactNode }) => (
  <div className="flex h-5 items-center pl-[13px] text-[13px] font-bold tracking-[0.06px] text-black">
    <svg viewBox="0 0 12 10" className="mb-[1px] h-[10px] w-3"><path d={open ? "M.5 1h11L6 9z" : "M3 0v10l7-5z"} fill="#3c3c3c" /></svg>
    <span className="ml-2 mt-[1px] whitespace-nowrap">{children}</span>
  </div>
);

const Btn = ({ className, children }: { className: string; children: ReactNode }) => (
  <div className={`flex h-6 w-20 items-center justify-center rounded-[3px] border border-[#b1b1b1] bg-[linear-gradient(to_bottom,#fff,#f1f1f1)] text-[#2d2d2d] ${className}`}>
    <span className="mt-[2px]">{children}</span>
  </div>
);

const cols: { h: string; v: string; w: string }[] = [
  { h: "Tract ID", v: "19001960100", w: "w-[96px]" },
  { h: "STATE2KX", v: "19", w: "w-[62px]" },
  { h: "CNTY2KX", v: "1", w: "w-[60px]" },
  { h: "TRACT2KX", v: "960100", w: "w-[66px]" },
  { h: "e(0)", v: "77.5", w: "w-[34px]" },
  { h: "se(e(0))", v: "1.3347", w: "w-[51px]" },
  { h: "Abridged life table flag", v: "3", w: "w-[132px]" },
];

const groupBox = "ml-[12px] border border-r-0 border-[#d3d3d3] bg-[#e8e8e8] rounded-l-[2px]";

function DelimitedForm() {
  return (
    <div className="flex h-[535px] w-[547px] flex-col border border-[#b3b3b3]">
      <div className="flex h-[519px]">
        <div className="w-[531px] overflow-hidden">
          <div className="h-[10px]" />
          <GroupTitle>File Format</GroupTitle>
          <div className={`${groupBox} mt-[1px] flex h-[119px] flex-col gap-[17px] pl-3 pt-[17px]`}>
            <Radio on>CSV (comma separated values)</Radio>
            <Radio>Regular expression delimiter</Radio>
            <Radio>Custom delimiters</Radio>
          </div>
          <div className="h-[6px]" />
          <GroupTitle>Record and Fields Options</GroupTitle>
          <div className={`${groupBox} mt-0 flex h-[107px] pl-3 pt-[13px]`}>
            <div className="w-[292px]">
              <div className="flex h-[22px] items-center">
                <span className="mt-[2px] w-[211px] whitespace-nowrap text-black">Number of header lines to discard</span>
                <div className="flex h-[22px] w-[66px] rounded-[3px] border border-[#a8a8a8] bg-white">
                  <span className="flex-1 pl-[4px] leading-[22px]">0</span>
                  <span className="flex w-[14px] flex-col items-center justify-center gap-[1px] rounded-r-[2px] border-l border-[#bcbcbc] bg-[#f3f3f3]">
                    <Tri dir="up" /><span className="flex opacity-50"><Tri dir="down" /></span>
                  </span>
                </div>
              </div>
              <div className="mt-[10px] flex flex-col gap-3"><Check on>First record has field names</Check><Check on>Detect field types</Check></div>
            </div>
            <div className="pt-[3px]">
              <Check>Decimal separator is comma</Check>
              <div className="mt-[13px] flex flex-col gap-3"><Check>Trim fields</Check><Check>Discard empty fields</Check></div>
            </div>
          </div>
          <div className="h-[6px]" />
          <GroupTitle>Geometry Definition</GroupTitle>
          <div className={`${groupBox} flex h-[109px] flex-col gap-[13px] pl-3 pt-[16px]`}>
            <Radio>Point coordinates</Radio>
            <Radio>Well known text (WKT)</Radio>
            <Radio on>No geometry (attribute only table)</Radio>
          </div>
          <div className="h-[6px]" />
          <GroupTitle open={false}>Layer Settings</GroupTitle>
          <div className="mt-2 h-5 pl-[12.500px] text-[13px] font-bold leading-[19px] tracking-[0.06px] text-black">Sample Data</div>
          <div className={`${groupBox} h-[60px] rounded-b-none border-b-0 pl-3 pt-3`}>
            <div className="w-[540px] border-l border-t border-[#b9b9b9]">
              <div className="flex h-[17px] bg-[linear-gradient(to_bottom,#f8f8f8,#ececec)] text-[11px] leading-[18px] tracking-[-0.1px] text-[#3a3a3a]">
                <div className="w-[18px] shrink-0 border-b border-[#bdbdbd]" />
                {cols.map((c) => <div key={c.h} className={`${c.w} shrink-0 whitespace-nowrap border-b border-r border-[#bdbdbd] text-center`}>{c.h}</div>)}
              </div>
              <div className="flex h-[22px] bg-white text-[13px] leading-[17px] tracking-[0.05px] text-[#161616]">
                <div className="w-[18px] shrink-0 border-r border-[#bdbdbd] bg-[#efefef] pl-[2px] text-[11px] text-[#444]">1</div>
                {cols.map((c) => <div key={c.h} className={`${c.w} shrink-0 border-r border-[#c9c9c9] pl-[4px]`}>{c.v}</div>)}
              </div>
            </div>
          </div>
        </div>
        <div className="flex w-[14px] flex-col border-l border-[#b9b9b9]">
          <div className="flex h-[14px] items-center justify-center border-b border-[#b9b9b9] bg-[#f7f7f7]"><Tri dir="up" /></div>
          <div className="h-[440px] bg-[linear-gradient(to_right,#ededed,#fff_60%,#fafafa)]" />
          <div className="flex-1 border-y border-[#b9b9b9] bg-[#e2e2e2]" />
          <div className="flex h-[14px] items-center justify-center bg-[#f7f7f7]"><Tri dir="down" /></div>
        </div>
      </div>
      <div className="flex h-[14px] border-t border-[#b9b9b9]">
        <div className="flex w-[13px] items-center justify-center border-r border-[#b9b9b9] bg-[#f7f7f7]"><Tri dir="left" /></div>
        <div className="w-[426px] bg-[linear-gradient(to_bottom,#f2f2f2,#fff)]" />
        <div className="w-[79px] border-x border-[#b9b9b9] bg-[#e2e2e2]" />
        <div className="flex w-[13px] items-center justify-center bg-[#f7f7f7]"><Tri dir="right" /></div>
        <div className="flex-1 border-l border-[#b9b9b9] bg-[#ececec]" />
      </div>
    </div>
  );
}

function Dialog() {
  return (
    <div className="absolute left-[391px] top-[199px] z-20 flex h-[697px] w-[791px] flex-col overflow-hidden rounded-[5px] bg-[#ececec] shadow-[0_4px_22px_rgba(0,0,0,0.55)]">
      <div className="flex h-[22px] shrink-0 items-center border-b border-[#b0b0b0] border-t border-t-[#f5f5f5] bg-[linear-gradient(to_bottom,#e3e3e3,#cdcdcd)] pl-[280px] text-[12.500px] tracking-[0.11px] text-[#4d4d4d]">
        <span className="mt-[2px] whitespace-nowrap">Data Source Manager | Delimited Text</span>
      </div>
      <div className="flex min-h-0 flex-1">
        <div className="flex w-[200px] flex-col overflow-hidden bg-[#5b5b5b] text-[12.500px] tracking-[-0.28px] text-[#f5f5f5]">
          <div className="h-36 shrink-0" />
          <div className="h-9 shrink-0 bg-[#ececec]" />
          {sources.map((s) => (
            <div key={s.t} className="flex h-9 shrink-0 items-center pl-[3px]">
              <LayerIcon name={s.icon} size="h-7 w-7" />
              <span className="ml-[6px] mt-[2px] whitespace-nowrap">{s.t}</span>
            </div>
          ))}
        </div>
        <div className="flex w-[14px] flex-col bg-[#ececec]">
          <div className="flex h-[13px] items-center justify-center border-b border-[#b9b9b9] bg-[#fafafa]"><Tri dir="up" /></div>
          <div className="h-[613px] bg-[linear-gradient(to_right,#fff,#fbfbfb_50%,#ececec)]" />
          <div className="flex-1 border-y border-[#b9b9b9] bg-[#e2e2e2]" />
          <div className="flex h-[13px] items-center justify-center bg-[#fafafa]"><Tri dir="down" /></div>
        </div>
        <div className="flex w-[15px] items-center">
          <svg viewBox="0 0 3 16" className="ml-[1px] h-4 w-[3px]"><path d="M1.500 0v16" stroke="#a5a5a5" strokeWidth="1" strokeDasharray="1 2" /></svg>
        </div>
        <div className="w-[548px] pt-[14px] text-[13px] tracking-[-0.18px] text-[#141414]">
          <div className="flex h-6 items-center">
            <span className="mt-[2px] w-[64px] whitespace-nowrap">File name</span>
            <div className="flex h-6 w-[454px] items-center rounded-[3px] border border-[#a9a9a9] bg-white text-black">
              <div className="mt-[2px] flex w-[422px] justify-end overflow-hidden whitespace-nowrap tracking-[-0.08px]">wen/Desktop/IA-life-expectancy-map/data/IA-life-expectancy-data.csv</div>
              <svg viewBox="0 0 13 10" className="ml-[9px] h-[10px] w-[13px]"><path d="M4 0h9v10H4L0 5z" fill="#8c8c8c" /><path d="M5 2.500l5 5M10 2.500l-5 5" stroke="#fff" strokeWidth="1.200" /></svg>
            </div>
            <div className="ml-[6px] flex h-[19px] w-[23px] justify-center rounded-[3px] border border-[#b1b1b1] bg-[#fafafa] text-[11px] leading-[15px]">...</div>
          </div>
          <div className="mt-[6px] flex h-6 items-center">
            <span className="mt-[2px] w-[77px] whitespace-nowrap">Layer name</span>
            <div className="flex h-6 w-[248px] items-center rounded-[3px] border border-[#a9a9a9] bg-white pl-[2px] text-black"><span className="mt-[2px] tracking-[-0.12px]">IA-life-expectancy-data</span></div>
            <span className="ml-[6px] mt-[2px] w-[63px]">Encoding</span>
            <div className="flex h-6 w-[153px] items-center justify-between rounded-[3px] border border-[#b1b1b1] bg-[linear-gradient(to_bottom,#fdfdfd,#efefef)] pl-[4px] pr-[7px]"><span className="mt-[2px]">UTF-8</span><Tri dir="down" /></div>
          </div>
          <div className="h-[6px]" />
          <DelimitedForm />
          <div className="mt-7 flex">
            <Btn className="">Help</Btn>
            <Btn className="ml-[301px]"><span className="underline underline-offset-2">A</span>dd</Btn>
            <Btn className="ml-[6px]">Close</Btn>
          </div>
        </div>
      </div>
    </div>
  );
}

function Annotations() {
  return (
    <svg viewBox="0 0 1185 900" className="pointer-events-none absolute left-0 top-0 z-50 h-[900px] w-[1185px]" fill="none" stroke="#fa0000" strokeWidth="4.300">
      <ellipse cx="741.500" cy="351.500" rx="128.500" ry="25.500" />
      <ellipse cx="735.500" cy="685.800" rx="129.800" ry="24.300" />
      <ellipse cx="1032" cy="867" rx="45" ry="27" />
      <path d="M912 258.500L1117 258.300" />
    </svg>
  );
}

export default function App() {
  return (
    <div className={`relative h-[900px] w-[1185px] overflow-hidden bg-[#b5b5b5] ${UI}`}>
      <MenuBar />
      <QgisWindow />
      <Dialog />
      <LayerMenu />
      <AddLayerMenu />
      <Annotations />
    </div>
  );
}
